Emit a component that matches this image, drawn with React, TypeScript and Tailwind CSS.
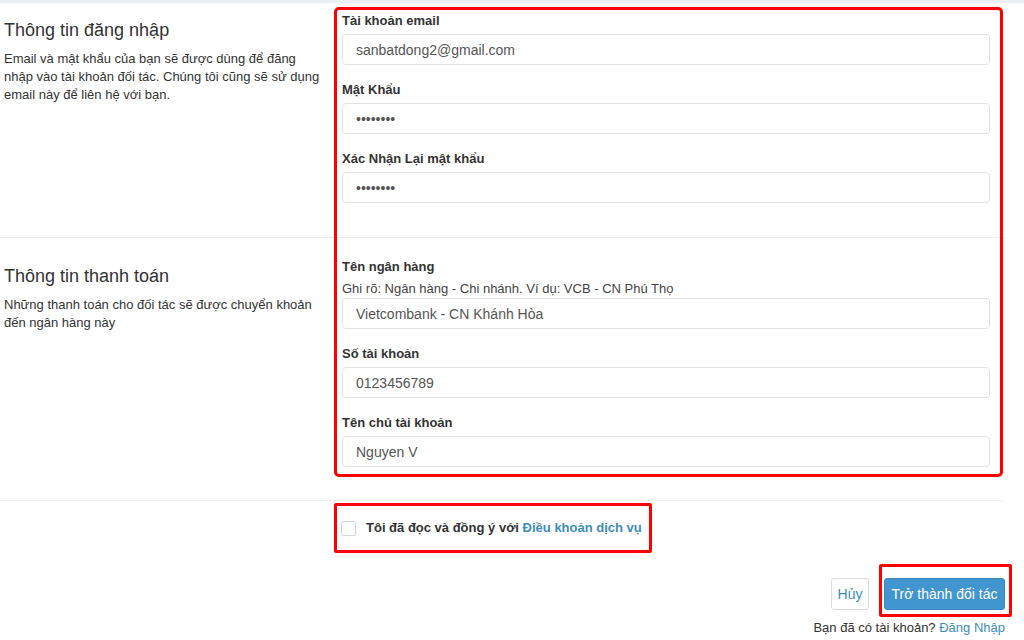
// trang đăng ký đối tác

const inputCls =
  "block w-full h-[31px] px-[13px] border border-[#e3e3e3] rounded-[4px] text-[14px] text-[#555] bg-white outline-none";
const labelCls = "block text-[13px] font-bold leading-[18px] mb-[4px] text-[#333]";

function Field({ label, value, help, last }: { label: string; value: string; help?: string; last?: boolean }) {
  return (
    <div className={last ? "" : "mb-[16px]"}>
      <label className={labelCls}>{label}</label>
      {help && <p className="text-[13px] leading-[18px] text-[#444]">{help}</p>}
      <input className={inputCls} defaultValue={value} readOnly />
    </div>
  );
}

export default function App() {
  return (
    <div className="relative w-[1024px] h-[640px] overflow-hidden bg-white text-[#333] font-['Liberation_Sans',Arial,sans-serif]">
      <div className="h-[3px] bg-[#ecf0f5]" />

      <div className="w-[1005px]">
        {/* thông tin đăng nhập */}
        <div className="flex h-[235px] border-b border-[#eee]">
          <div className="w-[338px] pl-1 pt-[17px] pr-4">
            <h3 className="text-[18px] leading-[20px] mb-[10px]">Thông tin đăng nhập</h3>
            <p className="text-[13px] leading-[18px]">
              Email và mật khẩu của bạn sẽ được dùng để đăng nhập vào tài khoản đối tác. Chúng tôi cũng sẽ sử dụng
              email này để liên hệ với bạn.
            </p>
          </div>
          <div className="flex-1 pl-1 pr-[15px] pt-[9px]">
            <Field label="Tài khoản email" value="sanbatdong2@gmail.com" />
            <Field label="Mật Khẩu" value="••••••••" />
            <Field label="Xác Nhận Lại mật khẩu" value="••••••••" last />
          </div>
        </div>

        {/* thông tin thanh toán */}
        <div className="flex h-[263px] border-b border-[#eee]">
          <div className="w-[338px] pl-1 pt-[28px] pr-4">
            <h3 className="text-[18px] leading-[20px] mb-[10px]">Thông tin thanh toán</h3>
            <p className="text-[13px] leading-[18px]">
              Những thanh toán cho đối tác sẽ được chuyển khoản đến ngân hàng này
            </p>
          </div>
          <div className="flex-1 pl-1 pr-[15px] pt-[20px]">
            <Field
              label="Tên ngân hàng"
              help="Ghi rõ: Ngân hàng - Chi nhánh. Ví dụ: VCB - CN Phú Thọ"
              value="Vietcombank - CN Khánh Hòa"
            />
            <Field label="Số tài khoản" value="0123456789" />
            <Field label="Tên chủ tài khoản" value="Nguyen V" last />
          </div>
        </div>

        {/* điều khoản */}
        <div className="flex items-center pt-[18px] pl-[341px] h-[18px] box-content">
          <span className="w-[15px] h-[15px] border border-[#d2d6de] rounded-[2px] mr-[10px]" />
          <span className="text-[13px] leading-[18px] font-bold">
            Tôi đã đọc và đồng ý với <a className="text-[#3c8dbc]">Điều khoản dịch vụ</a>
          </span>
        </div>

        <div className="flex justify-end gap-[15px] mt-[41px]">
          <button className="h-[32px] w-[38px] border border-[#ddd] rounded-[3px] bg-white text-[14px] text-[#3c8dbc]">
            Hủy
          </button>
          <button className="h-[32px] w-[121px] border border-[#3a88c0] rounded-[3px] bg-[#4196cf] text-[14px] text-white">
            Trở thành đối tác
          </button>
        </div>
        <p className="mt-[9px] text-right text-[13px] leading-[18px]">
          Bạn đã có tài khoản? <a className="text-[#3c8dbc]">Đăng Nhập</a>
        </p>
      </div>

      {/* khung đánh dấu màu đỏ */}
      <div className="absolute left-[334px] top-[7px] w-[669px] h-[470px] border-[3px] border-[#f00] rounded-[5px] pointer-events-none" />
      <div className="absolute left-[334px] top-[503px] w-[318px] h-[50px] border-[3px] border-[#f00] rounded-[2px] pointer-events-none" />
      <div className="absolute left-[879px] top-[564px] w-[133px] h-[53px] border-[3px] border-[#f00] rounded-[2px] pointer-events-none" />
    </div>
  );
}
